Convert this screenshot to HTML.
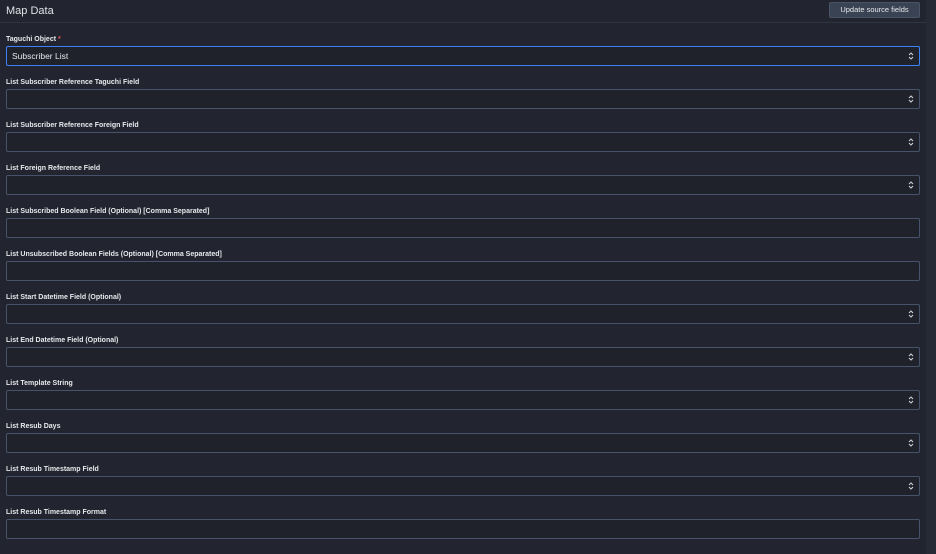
<!DOCTYPE html>
<html><head><style>
html,body{margin:0;padding:0;}
body{width:936px;height:554px;background:#22252f;font-family:"Liberation Sans",sans-serif;position:relative;overflow:hidden;color:#e6e8ec;}
.strip{position:absolute;left:926px;top:0;width:10px;height:554px;background:#262a34;}
.h{position:absolute;left:6px;top:5px;font-size:11px;color:#dfe2e7;}
.div{position:absolute;left:0;top:22px;width:926px;height:1px;background:#2f3440;}
.btn{position:absolute;left:829px;top:2px;width:89px;height:14px;background:#3a4353;border:1px solid #4a5466;border-radius:2px;font-size:7.5px;line-height:14px;text-align:center;color:#e6e8ec;}
.l{position:absolute;left:6px;font-size:7px;font-weight:bold;color:#e6e8ec;}
.i{position:absolute;left:6px;width:912px;height:18px;border:1px solid #46536a;border-radius:2px;background:#1f222b;font-size:8.5px;line-height:18px;color:#e6e8ec;}
.i span{padding-left:5px;}
.a{position:absolute;right:5px;top:4px;width:6px;height:10px;}
</style></head><body>
<div class="strip"></div>
<div class="h">Map Data</div>
<div class="btn">Update source fields</div>
<div class="div"></div>

<div class="l" style="top:36px">Taguchi Object <span style="color:#e05555">*</span></div>
<div class="i" style="top:46px;border-color:#3b82f6"><span>Subscriber List</span><svg class="a" viewBox="0 0 6 10"><path d="M1 4 L3 2 L5 4 M1 6 L3 8 L5 6" stroke="#d0d4da" fill="none" stroke-width="1"/></svg></div>

<div class="l" style="top:79px">List Subscriber Reference Taguchi Field</div>
<div class="i" style="top:89px"><svg class="a" viewBox="0 0 6 10"><path d="M1 4 L3 2 L5 4 M1 6 L3 8 L5 6" stroke="#d0d4da" fill="none"/></svg></div>

<div class="l" style="top:122px">List Subscriber Reference Foreign Field</div>
<div class="i" style="top:132px"><svg class="a" viewBox="0 0 6 10"><path d="M1 4 L3 2 L5 4 M1 6 L3 8 L5 6" stroke="#d0d4da" fill="none"/></svg></div>

<div class="l" style="top:165px">List Foreign Reference Field</div>
<div class="i" style="top:175px"><svg class="a" viewBox="0 0 6 10"><path d="M1 4 L3 2 L5 4 M1 6 L3 8 L5 6" stroke="#d0d4da" fill="none"/></svg></div>

<div class="l" style="top:208px">List Subscribed Boolean Field (Optional) [Comma Separated]</div>
<div class="i" style="top:218px"></div>

<div class="l" style="top:251px">List Unsubscribed Boolean Fields (Optional) [Comma Separated]</div>
<div class="i" style="top:261px"></div>

<div class="l" style="top:294px">List Start Datetime Field (Optional)</div>
<div class="i" style="top:304px"><svg class="a" viewBox="0 0 6 10"><path d="M1 4 L3 2 L5 4 M1 6 L3 8 L5 6" stroke="#d0d4da" fill="none"/></svg></div>

<div class="l" style="top:337px">List End Datetime Field (Optional)</div>
<div class="i" style="top:347px"><svg class="a" viewBox="0 0 6 10"><path d="M1 4 L3 2 L5 4 M1 6 L3 8 L5 6" stroke="#d0d4da" fill="none"/></svg></div>

<div class="l" style="top:380px">List Template String</div>
<div class="i" style="top:390px"><svg class="a" viewBox="0 0 6 10"><path d="M1 4 L3 2 L5 4 M1 6 L3 8 L5 6" stroke="#d0d4da" fill="none"/></svg></div>

<div class="l" style="top:423px">List Resub Days</div>
<div class="i" style="top:433px"><svg class="a" viewBox="0 0 6 10"><path d="M1 4 L3 2 L5 4 M1 6 L3 8 L5 6" stroke="#d0d4da" fill="none"/></svg></div>

<div class="l" style="top:466px">List Resub Timestamp Field</div>
<div class="i" style="top:476px"><svg class="a" viewBox="0 0 6 10"><path d="M1 4 L3 2 L5 4 M1 6 L3 8 L5 6" stroke="#d0d4da" fill="none"/></svg></div>

<div class="l" style="top:509px">List Resub Timestamp Format</div>
<div class="i" style="top:519px"></div>
</body></html>
